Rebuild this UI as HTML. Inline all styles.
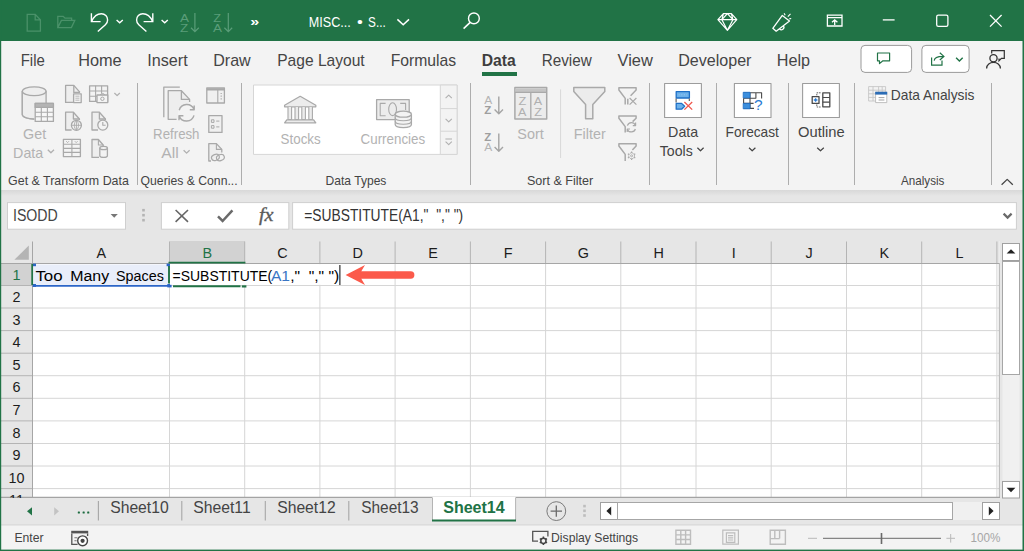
<!DOCTYPE html>
<html><head><meta charset="utf-8"><title>Excel</title>
<style>
*{box-sizing:border-box;margin:0;padding:0}
html,body{width:1024px;height:551px;overflow:hidden;background:#e6e6e6;font-family:"Liberation Sans",sans-serif;color:#444}
.abs{position:absolute}
svg{display:block}
#title{left:0;top:0;width:1024px;height:41px;background:#217346}
#ribbon{left:1px;top:41px;width:1022px;height:149px;background:#f3f3f3}
#ribshadow{left:1px;top:190px;width:1022px;height:6px;background:linear-gradient(#d8d8d8,#e6e6e6)}
.sep{width:1px;background:#adadad;top:83px;height:102px}
</style></head><body>
<div class="abs" id="title"></div>
<div class="abs" id="ribbon"></div>
<div class="abs" id="ribshadow"></div>

<!-- title bar icons -->
<svg class="abs" id="tbi" style="left:0;top:0" width="1024" height="41" fill="none" stroke="#fff" stroke-width="1.4" font-family="Liberation Sans, sans-serif">
<g stroke="#4a9169" stroke-width="1.3">
<path d="M35.2 14.3H27.2V31.2H40.4V19.8ZM35.2 14.3V19.8H40.4"/>
<path d="M57.8 27.6V16.3H63.2L65 18.2H71.6V20.4M57.8 27.6L61.4 20.4H74.8L71.4 27.6Z"/>
</g>
<path d="M91.4 13.2V21.6H100.6"/>
<path d="M91.8 21.3C93.6 16.8 97.2 13.7 101.4 13.7C105 13.7 107.6 16.5 107.6 19.9C107.6 22 106.8 23.4 105.4 24.7L97.8 31.5"/>
<path d="M116.6 19.9L119.7 22.8L122.8 19.9"/>
<path d="M152.8 13.2V21.6H143.6"/>
<path d="M152.4 21.3C150.6 16.8 147 13.7 142.8 13.7C139.2 13.7 136.6 16.5 136.6 19.9C136.6 22 137.4 23.4 138.8 24.7L146.4 31.5"/>
<path d="M161.6 19.9L164.7 22.8L167.8 19.9"/>
<g stroke="#5a9d79" stroke-width="1.2">
<path d="M194.9 13V31.4M191 27.8L194.9 31.6L198.8 27.8"/>
<path d="M228.3 13V31.4M224.4 27.8L228.3 31.6L232.2 27.8"/>
</g>
<g stroke="none" fill="#5a9d79" font-size="11.6">
<text x="179.9" y="21.5" textLength="9" lengthAdjust="spacingAndGlyphs">A</text>
<text x="180" y="31.9" textLength="8.2" lengthAdjust="spacingAndGlyphs">Z</text>
<text x="213.2" y="21.5" textLength="7.8" lengthAdjust="spacingAndGlyphs">Z</text>
<text x="212.9" y="31.9" textLength="9" lengthAdjust="spacingAndGlyphs">A</text>
</g>
<text x="250.3" y="25.7" font-size="12.8" font-weight="bold" fill="#fff" stroke="none" textLength="9" lengthAdjust="spacingAndGlyphs">»</text>
<path d="M397.4 19.4L403.2 24.8L409 19.4" stroke-width="1.5"/>
<circle cx="473.9" cy="18.4" r="5.4"/><path d="M470.2 22.4L463.6 28.6" stroke-width="1.6"/>
<!-- diamond -->
<path d="M723.4 13.7H731.4L736.8 19.7L727.4 30.3L717.9 19.7ZM717.9 19.7H736.8M723.4 13.7L721.9 19.7L727.4 30.3L732.9 19.7L731.4 13.7M727.4 13.7L721.9 19.7M727.4 13.7L732.9 19.7" stroke-width="1.2" stroke-linejoin="round"/>
<!-- megaphone -->
<path d="M772.8 28.3L782.3 15.4L789.5 20.9L776.2 31.2ZM779.6 28.8A2.1 2.1 0 0 0 783.4 26" stroke-width="1.3" stroke-linejoin="round"/>
<path d="M785.2 15.2L784.1 13.3M787.8 16.6L790.5 13.8M789.3 18.9L791.2 18.5" stroke-width="1.1"/>
<!-- ribbon display -->
<path d="M827.4 15.2H842V26H827.4ZM827.4 17.6H842M834.7 25V20M832 22.3L834.7 19.8L837.4 22.3" stroke-width="1.3"/>
<!-- window controls -->
<path d="M882.8 19.9H894.6" stroke-width="1.3"/>
<rect x="936.7" y="15.2" width="11.2" height="11.2" rx="1.6" stroke-width="1.3"/>
<path d="M990 15L1001.6 26.6M1001.6 15L990 26.6" stroke-width="1.3"/>
</svg>

<!-- tabs -->
<div class="abs" style="left:482px;top:72px;width:35px;height:4px;background:#217346"></div>

<!-- tab row right buttons -->
<svg class="abs" id="trb" style="left:856px;top:42px" width="168" height="38" viewBox="856 42 168 38" fill="none">
<rect x="861" y="45.4" width="50.6" height="27" rx="4" fill="#fff" stroke="#9a9a9a" stroke-width="1"/>
<rect x="921.9" y="45.4" width="47.2" height="27" rx="4" fill="#fff" stroke="#9a9a9a" stroke-width="1"/>
<path d="M877.5 53H889.6V60.8H882.9L879.5 63.6V60.8H877.5Z" stroke="#217346" stroke-width="1.2" stroke-linejoin="round"/>
<path d="M931.6 57.6V65.1H942V60.6M934.2 60.6C934.4 57.6 936.8 56.3 943.4 56.4M939.8 52.8L943.9 56.4L939.8 60" stroke="#217346" stroke-width="1.2"/>
<path d="M956.1 57.8L959.4 61.1L962.7 57.8" stroke="#217346" stroke-width="1.4"/>
<circle cx="993.5" cy="58.3" r="3.6" stroke="#333" stroke-width="1.3"/>
<path d="M986.6 68.4C986.6 60.4 1000.4 60.4 1000.4 68.4" stroke="#333" stroke-width="1.3"/>
<path d="M991.7 53.4V50.7H1004.3V58.4H1001.4L999 60.8V58.6" stroke="#333" stroke-width="1.2"/>
</svg>
<!-- ribbon icons A: Get&Transform + Queries -->
<svg class="abs" id="ria" style="left:0;top:80px" width="250" height="90" viewBox="0 80 250 90" fill="none" stroke="#a9a9a9" stroke-width="1.3" stroke-linejoin="round">
<!-- cylinder -->
<path d="M22.3 91.2V114.6C22.3 117 27.4 119 34.3 119" fill="#eeeeee"/>
<path d="M22.3 91.2V114.6C22.3 117 27.4 119 34.3 119V104H46V91.2Z" fill="#eeeeee" stroke="none"/>
<ellipse cx="34.2" cy="91.2" rx="11.9" ry="4.4" fill="#eeeeee"/>
<path d="M22.3 91.2V114.6C22.3 117 27.4 119 34.3 119M46.1 91.2V103"/>
<!-- table -->
<rect x="35.2" y="103.4" width="18.2" height="18" fill="#f7f7f7"/>
<rect x="35.2" y="103.4" width="18.2" height="4" fill="#b4b4b4"/>
<path d="M35.2 112.2H53.4M35.2 116.8H53.4M41.3 107.4V121.4M47.4 107.4V121.4" stroke-width="1.1"/>
<!-- Get Data chevron -->
<path d="M47.8 149.8L50.9 152.8L54 149.8" stroke="#b0b0b0"/>
<!-- icon A: doc with small text doc -->
<path d="M73 102.4H65.6V85.4H73.8L80 92.4" fill="#eeeeee"/>
<path d="M73.8 85.4V92.4H80"/>
<rect x="73.6" y="93.8" width="7.6" height="8.8" fill="#f3f3f3"/>
<path d="M75.4 96.2H79.4M75.4 98.2H79.4M75.4 100.2H79.4" stroke-width="0.8"/>
<!-- icon B: table with camera -->
<rect x="89.6" y="85.8" width="18" height="15.6" fill="#f3f3f3"/>
<path d="M89.6 91H107.6M89.6 96.2H97M95.6 85.8V101.4M101.6 85.8V93.6" stroke-width="1.1"/>
<rect x="97" y="95" width="10.8" height="7.6" fill="#f3f3f3"/><path d="M100.4 95L101.2 93.8H103.8L104.6 95" stroke-width="1"/><circle cx="102.4" cy="98.8" r="1.7" stroke-width="1"/>
<path d="M114.4 93L117.1 95.6L119.8 93" stroke="#b0b0b0"/>
<!-- icon C: doc with globe -->
<path d="M71.6 130H65.6V112.2H73.4L79.4 119V120" fill="#eeeeee"/>
<path d="M73.4 112.2V119H79.4"/>
<circle cx="76.4" cy="125.3" r="5" fill="#f3f3f3"/>
<path d="M71.4 125.3H81.4M76.4 120.3V130.3M76.4 120.3C73.6 122.6 73.6 128 76.4 130.3M76.4 120.3C79.2 122.6 79.2 128 76.4 130.3" stroke-width="0.9"/>
<!-- icon D: doc with clock -->
<path d="M98 130H92V112.2H99.4L105.4 119V120" fill="#eeeeee"/>
<path d="M99.4 112.2V119H105.4"/>
<circle cx="102.8" cy="125.1" r="5" fill="#f3f3f3"/>
<path d="M102.8 122V125.3H105.6" stroke-width="1.1"/>
<!-- icon E: table with header arrows -->
<rect x="63.4" y="139.4" width="17" height="17.2" fill="#f3f3f3"/>
<path d="M63.4 144.2H80.4M63.4 148.4H80.4M63.4 152.4H80.4M71.9 139.4V156.6" stroke-width="1.1"/>
<path d="M66.2 141.2L67.6 142.6L69 141.2M74.8 141.2L76.2 142.6L77.6 141.2" stroke-width="0.9"/>
<!-- icon F: doc with cylinder -->
<path d="M99 157.4H92V139.5H98.4L103.2 145V146" fill="#eeeeee"/>
<path d="M98.4 139.5V145H103.2" stroke-width="1.1"/>
<path d="M99.8 148V155.8C99.8 158 107.4 158 107.4 155.8V148" fill="#f3f3f3"/>
<ellipse cx="103.6" cy="148" rx="3.8" ry="1.7" fill="#f3f3f3"/>
<!-- Refresh All -->
<path d="M179.8 87.2H163.8V117.2"/>
<path d="M176.6 119.3H168.2V90.7H181.4L189.6 99.4V102" fill="#eeeeee"/>
<path d="M181.4 90.7V99.4H189.6"/>
<circle cx="186.6" cy="112.8" r="8.8" fill="#f3f3f3" stroke="none"/>
<path d="M179.2 110.2A7.8 7.8 0 0 1 194 109.6M194.2 105.4V109.8H189.8M194 115.4A7.8 7.8 0 0 1 179.2 116M179 120.2V115.8H183.4" stroke-width="1.4"/>
<path d="M183.6 150.2L186.6 153.1L189.6 150.2" stroke="#b0b0b0"/>
<!-- queries pane -->
<rect x="206.8" y="88" width="17.6" height="15" fill="#f0f0f0"/>
<path d="M206.8 89.4H224.4" stroke-width="2.2"/><path d="M217.8 90V103" stroke-width="1.1"/>
<path d="M220.6 93.5H221.8M220.6 96.2H221.8M220.6 98.9H221.8" stroke-width="1.2"/>
<!-- properties -->
<rect x="208.8" y="115.6" width="13.2" height="16.8" fill="#f0f0f0"/>
<rect x="211.4" y="119.8" width="2.6" height="2.6" stroke-width="1"/><rect x="211.4" y="125.6" width="2.6" height="2.6" stroke-width="1"/>
<path d="M216.2 121.1H219.4M216.2 126.9H219.4" stroke-width="1"/>
<!-- doc with link -->
<path d="M211 161H208.8V143.6H216.4L221.8 149.4V152.6" fill="#eeeeee"/>
<path d="M216.4 143.6V149.4H221.8" stroke-width="1.1"/>
<ellipse cx="215.4" cy="157.4" rx="4" ry="3" stroke-width="1.2" transform="rotate(-20 215.4 157.4)"/>
<ellipse cx="220.4" cy="157.6" rx="4" ry="3" stroke-width="1.2" transform="rotate(-20 220.4 157.6)"/>
</svg>
<!-- ribbon icons B: Data Types + Sort/Filter -->
<svg class="abs" id="rib" style="left:250px;top:80px" width="400" height="90" viewBox="250 80 400 90" fill="none" stroke="#a9a9a9" stroke-width="1.3" stroke-linejoin="round" font-family="Liberation Sans, sans-serif">
<!-- gallery -->
<rect x="253.5" y="85" width="203.6" height="69.4" fill="#fff" stroke="#d6d6d6" stroke-width="1"/>
<rect x="440.3" y="85" width="16.8" height="69.4" fill="#f3f3f3" stroke="#d6d6d6" stroke-width="1"/>
<path d="M440.3 108.6H457.1M440.3 131.2H457.1" stroke="#d6d6d6" stroke-width="1"/>
<path d="M445.6 98.2L448.7 95.1L451.8 98.2M445.6 118.8L448.7 121.9L451.8 118.8M445.4 139H452M445.6 141.6L448.7 144.7L451.8 141.6" stroke="#b0b0b0" stroke-width="1.1"/>
<!-- stocks (bank) -->
<path d="M284.6 105.2L300.2 96.3L315.8 105.2V106.8H284.6Z" fill="#ececec"/>
<path d="M288 107V119.6H291.6V107M295 107V119.6H298.6V107M301.8 107V119.6H305.4V107M308.8 107V119.6H312.4V107" fill="#ececec" stroke-width="1.1"/>
<path d="M286.8 119.8H313.6L315.8 122.8H284.6Z" fill="#ececec"/>
<!-- currencies -->
<rect x="376.6" y="99.6" width="32.6" height="20" fill="#ececec"/>
<path d="M385.6 103.4H380.2V115.8H385.6M400.2 103.4H405.6V110" stroke-width="1.1"/>
<ellipse cx="392.6" cy="109.2" rx="3.9" ry="6.4" stroke-width="1.1"/>
<path d="M395.2 114.2V124.6C395.2 128.6 411.4 128.6 411.4 124.6V114.2" fill="#f3f3f3"/>
<ellipse cx="403.3" cy="114.2" rx="8.1" ry="3" fill="#f3f3f3"/>
<path d="M395.2 117.8C395.2 121.8 411.4 121.8 411.4 117.8M395.2 121.2C395.2 125.2 411.4 125.2 411.4 121.2" stroke-width="1.1"/>
<!-- AZ / ZA sort -->
<path d="M498.8 96.4V113.6M494.6 109.6L498.8 113.8L503 109.6M498.8 133.4V151M494.6 147L498.8 151.2L503 147" stroke="#a4a4a4" stroke-width="1.4"/>
<g stroke="none" fill="#b4b4b4" font-size="10.2">
<text x="484.2" y="103.8" textLength="8" lengthAdjust="spacingAndGlyphs">A</text>
<text x="484.2" y="151.4" textLength="8" lengthAdjust="spacingAndGlyphs">A</text>
</g>
<g stroke="none" fill="#9e9e9e" font-size="10.4" font-weight="bold">
<text x="484.2" y="114.3" textLength="7" lengthAdjust="spacingAndGlyphs">Z</text>
<text x="484.2" y="140.9" textLength="7" lengthAdjust="spacingAndGlyphs">Z</text>
</g>
<!-- Sort icon -->
<rect x="514.9" y="87.6" width="31.8" height="31.4" fill="#ececec" stroke-width="1.5"/>
<rect x="515.6" y="88.4" width="30.4" height="3.6" fill="#c4c4c4" stroke="none"/>
<path d="M530.8 92V119M515 92.4H546.6" stroke-width="1.3"/>
<g stroke="none" fill="#b0b0b0" font-size="11.4">
<text x="518.4" y="104.5" textLength="7.8" lengthAdjust="spacingAndGlyphs">Z</text>
<text x="518" y="115.7" textLength="8.4" lengthAdjust="spacingAndGlyphs">A</text>
<text x="533.8" y="104.5" textLength="8.4" lengthAdjust="spacingAndGlyphs">A</text>
<text x="534.2" y="115.7" textLength="7.8" lengthAdjust="spacingAndGlyphs">Z</text>
</g>
<path d="M560.6 89.4V158" stroke="#d8d8d8" stroke-width="1"/>
<!-- Filter -->
<path d="M573.8 87.6H604.8V91.4L592.8 104.4V118.8H585.6V104.4L573.8 91.4Z" fill="#ececec" stroke-width="1.5"/>
<!-- small filters -->
<path d="M625.2 104.4V98.4L618.9 90V87.7H636.1V90L630.6 95.8M627.8 98.8V104.4" stroke-width="1.5"/>
<path d="M629.6 98L636.4 104.6M636.4 98L629.6 104.6" stroke-width="1.2"/>
<path d="M625.2 132.6V126.6L618.9 118.2V115.9H636.1V118.2L632.6 121.6" stroke-width="1.5"/>
<path d="M627.4 125.6A4.3 4.3 0 0 1 635.4 125.2M635.6 122.6V125.6H632.8M635.4 129A4.3 4.3 0 0 1 627.4 129.4M627.2 132V129H630" stroke-width="1.2"/>
<path d="M625.2 161V154.4L618.9 146V143.7H636.1V146L632.4 150" stroke-width="1.5"/>
<circle cx="631.6" cy="155.8" r="2.9" stroke-width="1" stroke-dasharray="1.6 0.7"/><circle cx="631.6" cy="155.8" r="1" stroke-width="0.9"/>
<path d="M631.6 151.6V153M631.6 158.6V160M627.9 153.7L629.1 154.4M634.1 157.2L635.3 157.9M627.9 157.9L629.1 157.2M634.1 154.4L635.3 153.7" stroke-width="1.2"/>
</svg>
<!-- ribbon icons C: Data Tools, Forecast, Outline, Analysis -->
<svg class="abs" id="ric" style="left:650px;top:80px" width="374" height="110" viewBox="650 80 374 110" fill="none" stroke-linejoin="round" font-family="Liberation Sans, sans-serif">
<rect x="664.6" y="83.5" width="36.8" height="34" fill="#fff" stroke="#9c9c9c" stroke-width="1.1"/>
<rect x="734.4" y="83.5" width="36.6" height="34" fill="#fff" stroke="#9c9c9c" stroke-width="1.1"/>
<rect x="802.6" y="83.5" width="36.8" height="34" fill="#fff" stroke="#9c9c9c" stroke-width="1.1"/>
<!-- data tools icon -->
<rect x="676.2" y="91.6" width="13.2" height="6.4" fill="#6db1ea" stroke="#1e6fc6" stroke-width="1.3"/>
<path d="M678.6 94.8H687" stroke="#9ccaf2" stroke-width="0.8" stroke-dasharray="1.2 1.4"/>
<path d="M676.1 98.4V102.6M689.3 98.4V101" stroke="#555" stroke-width="1.1"/>
<path d="M676.2 103.4H681.6L684.6 106.3L681.6 109.2H676.2Z" fill="#6db1ea" stroke="#1e6fc6" stroke-width="1.3"/>
<path d="M684.4 102L692.2 109.6M692.2 102L684.4 109.6" stroke="#f0564d" stroke-width="1.3"/>
<!-- forecast icon -->
<path d="M743.6 92.8H761.6V98.4M743.6 98.2H756M743.6 103.4H753.6M743.6 108.4H754M750 92.8V108.4M755.9 92.8V98.4M743.6 98.2V103.4" stroke="#4a4a4a" stroke-width="1.1"/>
<rect x="743.2" y="92.3" width="6.8" height="5.6" fill="#3c8fdd" stroke="#1e6fc6" stroke-width="0.8"/><rect x="743.2" y="103.4" width="6.8" height="5.4" fill="#3c8fdd" stroke="#1e6fc6" stroke-width="0.8"/>
<text x="754" y="109.8" font-size="14.6" fill="#2b7cd3" textLength="8.6" lengthAdjust="spacingAndGlyphs">?</text>
<!-- outline icon -->
<rect x="812.2" y="96.6" width="6.8" height="6.8" stroke="#4a4a4a" stroke-width="1.3"/>
<path d="M815.6 98.2V101.8M813.8 100H817.4" stroke="#2b7cd3" stroke-width="1.3"/>
<path d="M820.6 92.8H816.8V95.6M816.8 104.4V107H820.6" stroke="#666" stroke-width="1" stroke-dasharray="1.6 0.8"/>
<rect x="822.8" y="92.8" width="7" height="14" stroke="#4a4a4a" stroke-width="1.3"/>
<path d="M822.8 97.5H829.8M822.8 102.2H829.8" stroke="#4a4a4a" stroke-width="1.2"/>
<!-- chevrons -->
<path d="M697.4 147.8L700.5 150.8L703.6 147.8M749 147.8L752.2 150.8L755.4 147.8M817.2 147.8L820.5 150.8L823.8 147.8" stroke="#444" stroke-width="1.2"/>
<!-- data analysis icon -->
<path d="M868.6 86.6H885.6V101H868.6ZM868.6 90.2H885.6M868.6 93.8H876M868.6 97.4H876M873 86.6V101M878.6 86.6V92M882.2 86.6V92" stroke="#c6c6c6" stroke-width="0.9"/>
<rect x="875.6" y="92.2" width="11.2" height="10.4" fill="#fff" stroke="#b9b9b9" stroke-width="0.9"/>
<rect x="875.2" y="91.8" width="12" height="2.8" fill="#2b6cb5"/>
<path d="M878.6 97.6H884.4M878.6 100H884.4" stroke="#999" stroke-width="0.9"/>
<!-- collapse caret -->
<path d="M1001.6 184.8L1007.2 179.4L1012.8 184.8" stroke="#444" stroke-width="1.3"/>
</svg>
<!-- group labels -->

<!-- separators -->
<div class="abs sep" style="left:137px"></div>
<div class="abs sep" style="left:241px"></div>
<div class="abs sep" style="left:470px"></div>
<div class="abs sep" style="left:649px"></div>
<div class="abs sep" style="left:716px"></div>
<div class="abs sep" style="left:788px"></div>
<div class="abs sep" style="left:854px"></div>
<div class="abs sep" style="left:991px"></div>

<!-- ribbon buttons text -->

<!-- formula bar -->
<svg class="abs" id="fbar" style="left:0;top:196px" width="1024" height="40" viewBox="0 196 1024 40" fill="none" font-family="Liberation Serif, serif">
<rect x="7.5" y="202.6" width="118" height="26.6" fill="#fff" stroke="#cfcfcf"/>
<rect x="161.4" y="202.6" width="127.4" height="26.6" fill="#fff" stroke="#cfcfcf"/>
<rect x="292.6" y="202.6" width="723.8" height="26.6" fill="#fff" stroke="#cfcfcf"/>
<path d="M110.6 214.1H117.8L114.2 217.7Z" fill="#777"/>
<rect x="142.2" y="208.9" width="2.6" height="2.6" fill="#b4b4b4"/><rect x="142.2" y="213.9" width="2.6" height="2.6" fill="#b4b4b4"/><rect x="142.2" y="218.9" width="2.6" height="2.6" fill="#b4b4b4"/>
<path d="M175.6 210L188 221.8M188 210L175.6 221.8" stroke="#666" stroke-width="1.6"/>
<path d="M218 216.4L222.6 221L232.4 210.4" stroke="#6a6a6a" stroke-width="2.5"/>
<text x="259" y="220.6" font-size="18.5" font-style="italic" fill="#5a5a5a" stroke="#5a5a5a" stroke-width="0.35" textLength="14.6" lengthAdjust="spacingAndGlyphs">fx</text>
<path d="M1003.6 213.6L1007.6 217.6L1011.6 213.6" stroke="#6a6a6a" stroke-width="2.2"/>
</svg>

<!-- grid -->
<svg class="abs" style="left:0;top:236px" width="1024" height="262" viewBox="0 236 1024 262" font-family="Liberation Sans, sans-serif">
<rect x="1" y="241" width="998.5" height="256.5" fill="#fff"/>
<rect x="1" y="241" width="998.5" height="22.5" fill="#e6e6e6"/>
<rect x="1" y="241" width="31.7" height="256.5" fill="#e6e6e6"/>
<rect x="169.7" y="241" width="75.2" height="21" fill="#d2d2d2"/>
<rect x="1" y="263.5" width="31" height="22" fill="#d2d2d2"/>
<path d="M169.5 263.5V497M244.7 263.5V497M319.9 263.5V497M395.1 263.5V497M470.4 263.5V497M545.6 263.5V497M620.8 263.5V497M696.0 263.5V497M771.2 263.5V497M846.5 263.5V497M921.7 263.5V497M996.9 263.5V497M32.5 285.5H999M32.5 308.0H999M32.5 330.6H999M32.5 353.2H999M32.5 375.7H999M32.5 398.3H999M32.5 420.9H999M32.5 443.5H999M32.5 466.0H999M32.5 488.6H999" stroke="#d6d6d6" stroke-width="1" fill="none"/>
<path d="M169.5 241.5V263M244.7 241.5V263M319.9 241.5V263M395.1 241.5V263M470.4 241.5V263M545.6 241.5V263M620.8 241.5V263M696.0 241.5V263M771.2 241.5V263M846.5 241.5V263M921.7 241.5V263M996.9 241.5V263M1 285.5H32M1 308.0H32M1 330.6H32M1 353.2H32M1 375.7H32M1 398.3H32M1 420.9H32M1 443.5H32M1 466.0H32M1 488.6H32" stroke="#b4b4b4" stroke-width="1" fill="none"/>
<path d="M1 263.5H999M32.5 241.5V497" stroke="#a6a6a6" stroke-width="1" fill="none"/>
<path d="M999.3 263V497.5" stroke="#b0b0b0" stroke-width="1" fill="none"/><path d="M1 497.4H1000" stroke="#a4a4a4" stroke-width="1.3" fill="none"/>
<path d="M28.8 245.4V259.8H14.4Z" fill="#b4b4b4"/>
<text x="101.3" y="258" font-size="14.4" text-anchor="middle" fill="#1c1c1c">A</text>
<text x="207.3" y="258" font-size="14.4" text-anchor="middle" fill="#217346">B</text>
<text x="282.5" y="258" font-size="14.4" text-anchor="middle" fill="#1c1c1c">C</text>
<text x="357.7" y="258" font-size="14.4" text-anchor="middle" fill="#1c1c1c">D</text>
<text x="433.0" y="258" font-size="14.4" text-anchor="middle" fill="#1c1c1c">E</text>
<text x="508.2" y="258" font-size="14.4" text-anchor="middle" fill="#1c1c1c">F</text>
<text x="583.4" y="258" font-size="14.4" text-anchor="middle" fill="#1c1c1c">G</text>
<text x="658.6" y="258" font-size="14.4" text-anchor="middle" fill="#1c1c1c">H</text>
<text x="733.8" y="258" font-size="14.4" text-anchor="middle" fill="#1c1c1c">I</text>
<text x="809.0" y="258" font-size="14.4" text-anchor="middle" fill="#1c1c1c">J</text>
<text x="884.3" y="258" font-size="14.4" text-anchor="middle" fill="#1c1c1c">K</text>
<text x="959.5" y="258" font-size="14.4" text-anchor="middle" fill="#1c1c1c">L</text>
<text x="16.5" y="279.7" font-size="14.4" text-anchor="middle" fill="#217346">1</text>
<text x="16.5" y="302.1" font-size="14.4" text-anchor="middle" fill="#1c1c1c">2</text>
<text x="16.5" y="324.6" font-size="14.4" text-anchor="middle" fill="#1c1c1c">3</text>
<text x="16.5" y="347.2" font-size="14.4" text-anchor="middle" fill="#1c1c1c">4</text>
<text x="16.5" y="369.8" font-size="14.4" text-anchor="middle" fill="#1c1c1c">5</text>
<text x="16.5" y="392.3" font-size="14.4" text-anchor="middle" fill="#1c1c1c">6</text>
<text x="16.5" y="414.9" font-size="14.4" text-anchor="middle" fill="#1c1c1c">7</text>
<text x="16.5" y="437.5" font-size="14.4" text-anchor="middle" fill="#1c1c1c">8</text>
<text x="16.5" y="460.0" font-size="14.4" text-anchor="middle" fill="#1c1c1c">9</text>
<text x="16.5" y="482.6" font-size="14.4" text-anchor="middle" fill="#1c1c1c">10</text>
<text x="16.5" y="505.2" font-size="14.4" text-anchor="middle" fill="#1c1c1c">11</text>
</svg>

<!-- deco: selection, arrow, scrollbars, tab bar, status bar -->
<svg class="abs" id="deco" style="left:0;top:0" width="1024" height="551">
<!-- status bar bg -->
<rect x="1" y="525.3" width="1022" height="25" fill="#f3f3f3"/>
<path d="M1 524.9H1023" stroke="#d6d6d6" stroke-width="1"/>
<!-- A1 reference highlight -->
<rect x="33.5" y="264.5" width="134.5" height="20.5" fill="#e9eefa"/>
<path d="M36 285.9H168" stroke="#2c66c8" stroke-width="1.8"/>
<rect x="32.6" y="263.6" width="3.4" height="2.6" fill="#2c66c8"/><rect x="32.6" y="284" width="3.4" height="3" fill="#2c66c8"/>
<rect x="166.6" y="263.6" width="3.4" height="2.6" fill="#2c66c8"/><rect x="167.3" y="284" width="4.3" height="3.4" fill="#2c66c8"/>
<!-- row header 1 green edge, col B green edge -->
<path d="M32.2 264V285" stroke="#217346" stroke-width="1.8"/>
<path d="M168.5 262.6H245.4" stroke="#217346" stroke-width="1.8"/>
<!-- B1 edit cell -->
<rect x="170" y="264.2" width="171" height="20.6" fill="#fff"/>
<path d="M169 266V283.5" stroke="#217346" stroke-width="1.9"/>
<path d="M173 286.2H240.5" stroke="#217346" stroke-width="1.9"/>
<rect x="241.8" y="285.3" width="4.6" height="2.2" fill="#217346"/>
<!-- text cursor -->
<path d="M339.9 265V285" stroke="#000" stroke-width="1"/>
<!-- red arrow -->
<path d="M345.6 275L365 265L361.3 271.3H410.7a3.7 3.7 0 0 1 0 7.4H361.3L365 285Z" fill="#fb5a4b"/>
<!-- vertical scrollbar -->
<rect x="1002.5" y="243.5" width="17" height="17" fill="#fff" stroke="#a0a0a0"/>
<path d="M1006.6 253.6H1015.4L1011 249.2Z" fill="#222"/>
<rect x="1002.5" y="261.5" width="17" height="219" fill="#f0f0f0" stroke="none"/>
<rect x="1002.5" y="261.5" width="17" height="113" fill="#fff" stroke="#a6a6a6"/>
<rect x="1002.5" y="481.5" width="17" height="16.5" fill="#fff" stroke="#a0a0a0"/>
<path d="M1006.6 487.8H1015.4L1011 492.2Z" fill="#222"/>
<!-- horizontal scrollbar -->
<rect x="600.5" y="502.5" width="17" height="17" fill="#fff" stroke="#a0a0a0"/>
<path d="M611.2 506.4V515.6L606.4 511Z" fill="#222"/>
<rect x="618" y="502" width="364" height="18" fill="#f0f0f0"/>
<rect x="617.5" y="502.5" width="335" height="17" fill="#fff" stroke="#a6a6a6"/>
<rect x="982.5" y="502.5" width="17" height="17" fill="#fff" stroke="#a0a0a0"/>
<path d="M988.8 506.4V515.6L993.6 511Z" fill="#222"/>
<!-- new sheet button + grip -->
<circle cx="556.3" cy="511.1" r="9.4" fill="none" stroke="#7a7a7a" stroke-width="1"/>
<path d="M550.6 511.1H562M556.3 505.4V516.8" stroke="#6a6a6a" stroke-width="1.3"/>
<rect x="583.2" y="504.8" width="2.6" height="2.6" fill="#bdbdbd"/><rect x="583.2" y="509.5" width="2.6" height="2.6" fill="#bdbdbd"/><rect x="583.2" y="514.2" width="2.6" height="2.6" fill="#bdbdbd"/>
<!-- sheet nav -->
<path d="M32 507.2V515.4L27 511.3Z" fill="#217346"/>
<path d="M54.2 507.2V515.4L59 511.3Z" fill="#c3c3c3"/>
<rect x="77.8" y="511.5" width="2.1" height="2.1" rx="0.5" fill="#1b6b3f"/><rect x="82.6" y="511.5" width="2.1" height="2.1" rx="0.5" fill="#1b6b3f"/><rect x="87.2" y="511.5" width="2.1" height="2.1" rx="0.5" fill="#1b6b3f"/>
<path d="M98.4 501V520.4M181.8 501V520.4M265.3 501V520.4M348.8 501V520.4" stroke="#a6a6a6" stroke-width="1.1"/>
<!-- active tab -->
<rect x="432.5" y="497" width="83" height="23" fill="#fff"/>
<path d="M432.5 498V520M515.6 498V520" stroke="#b4b4b4" stroke-width="1"/>
<path d="M432 520.5H516" stroke="#217346" stroke-width="2.2"/>
<!-- status icons -->
<path d="M71.8 533.4V544.4H77.6M87.6 533.4V536" stroke="#555" stroke-width="1.3" fill="none"/>
<path d="M71.2 532.1H88.2" stroke="#555" stroke-width="2.6"/>
<path d="M74.4 537.8H77.4M74.4 540.8H76.6" stroke="#777" stroke-width="1.1"/>
<circle cx="82.6" cy="540.8" r="4.9" fill="#fff" stroke="#444" stroke-width="1.4"/><circle cx="82.6" cy="540.8" r="2.1" fill="#444"/>
<path d="M538 541.2H532.7V531.3H547.9V536.6" stroke="#555" stroke-width="1.3" fill="none"/>
<circle cx="543.4" cy="540.8" r="2.6" fill="none" stroke="#444" stroke-width="1.5"/>
<path d="M543.4 536.6V538M543.4 543.6V545M539.8 538.7L541 539.4M545.8 542.2L547 542.9M539.8 542.9L541 542.2M545.8 539.4L547 538.7" stroke="#444" stroke-width="1.5"/>
<path d="M675.9 530.2H690.5V544.2H675.9ZM680.8 530.2V544.2M685.6 530.2V544.2M675.9 534.9H690.5M675.9 539.5H690.5" stroke="#bdbdbd" stroke-width="1.4" fill="none"/>
<path d="M722.8 530.2H738.4V544.2H722.8ZM726.4 532.8H734.8V542.4H726.4ZM728 535.6H733.2M728 537.8H733.2M728 540H733.2" stroke="#bdbdbd" stroke-width="1.2" fill="none"/>
<path d="M770.2 530.2H785.4V544.2H770.2ZM774.8 530.2V538.6M779.6 530.2V538.6M770.2 538.6H779.6" stroke="#bdbdbd" stroke-width="1.4" fill="none"/>
<!-- zoom slider -->
<path d="M808 538.3H817" stroke="#b8b8b8" stroke-width="1"/>
<path d="M823 538.3H941" stroke="#6a6a6a" stroke-width="1"/>
<path d="M881.5 533V544" stroke="#6a6a6a" stroke-width="1.6"/>
<path d="M946.4 538.3H955M950.7 534V542.6" stroke="#b8b8b8" stroke-width="1"/>
</svg>

<!-- status bar -->
<svg class="abs" id="txt" style="left:0;top:0;white-space:pre" width="1024" height="551" font-family="Liberation Sans, sans-serif" xml:space="preserve">
<!-- txt:title -->
<text x="308.8" y="27" font-size="14.5" textLength="42.0" lengthAdjust="spacingAndGlyphs" fill="#fff">MISC...</text>
<text x="357.1" y="27" font-size="14.5" textLength="5.8" lengthAdjust="spacingAndGlyphs" fill="#fff">•</text>
<text x="368.1" y="27" font-size="14.5" textLength="17.6" lengthAdjust="spacingAndGlyphs" fill="#fff">S...</text>
<!-- txt:tabs -->
<text x="20.7" y="65.7" font-size="16.2" textLength="24.1" lengthAdjust="spacingAndGlyphs" fill="#454545">File</text>
<text x="78.2" y="65.7" font-size="16.2" textLength="43.5" lengthAdjust="spacingAndGlyphs" fill="#454545">Home</text>
<text x="147.2" y="65.7" font-size="16.2" textLength="40.5" lengthAdjust="spacingAndGlyphs" fill="#454545">Insert</text>
<text x="213.2" y="65.7" font-size="16.2" textLength="37.5" lengthAdjust="spacingAndGlyphs" fill="#454545">Draw</text>
<text x="277.2" y="65.7" font-size="16.2" textLength="87.5" lengthAdjust="spacingAndGlyphs" fill="#454545">Page Layout</text>
<text x="390.7" y="65.7" font-size="16.2" textLength="65.5" lengthAdjust="spacingAndGlyphs" fill="#454545">Formulas</text>
<text x="541.7" y="65.7" font-size="16.2" textLength="50.0" lengthAdjust="spacingAndGlyphs" fill="#454545">Review</text>
<text x="617.5" y="65.7" font-size="16.2" textLength="35.3" lengthAdjust="spacingAndGlyphs" fill="#454545">View</text>
<text x="678.2" y="65.7" font-size="16.2" textLength="73.3" lengthAdjust="spacingAndGlyphs" fill="#454545">Developer</text>
<text x="776.7" y="65.7" font-size="16.2" textLength="33.3" lengthAdjust="spacingAndGlyphs" fill="#454545">Help</text>
<text x="481.7" y="65.7" font-size="16.2" textLength="34.0" lengthAdjust="spacingAndGlyphs" fill="#3e3e3e" font-weight="bold">Data</text>
<!-- txt:group labels -->
<text x="8.1" y="185" font-size="12.6" textLength="120.8" lengthAdjust="spacingAndGlyphs" fill="#444">Get &amp; Transform Data</text>
<text x="140.6" y="185" font-size="12.6" textLength="97.0" lengthAdjust="spacingAndGlyphs" fill="#444">Queries &amp; Conn...</text>
<text x="325.6" y="185" font-size="12.6" textLength="60.8" lengthAdjust="spacingAndGlyphs" fill="#444">Data Types</text>
<text x="526.9" y="185" font-size="12.6" textLength="66.3" lengthAdjust="spacingAndGlyphs" fill="#444">Sort &amp; Filter</text>
<text x="901.0" y="185" font-size="12.6" textLength="43.4" lengthAdjust="spacingAndGlyphs" fill="#444">Analysis</text>
<!-- txt:ribbon buttons -->
<text x="23.1" y="138.5" font-size="14.4" textLength="23.1" lengthAdjust="spacingAndGlyphs" fill="#b2b2b2">Get</text>
<text x="13.1" y="157.5" font-size="14.4" textLength="30.1" lengthAdjust="spacingAndGlyphs" fill="#b2b2b2">Data</text>
<text x="153.1" y="138.5" font-size="14.4" textLength="46.4" lengthAdjust="spacingAndGlyphs" fill="#b2b2b2">Refresh</text>
<text x="161.3" y="157.5" font-size="14.4" textLength="17.4" lengthAdjust="spacingAndGlyphs" fill="#b2b2b2">All</text>
<text x="280.6" y="143.75" font-size="14.4" textLength="40.1" lengthAdjust="spacingAndGlyphs" fill="#b2b2b2">Stocks</text>
<text x="360.6" y="143.75" font-size="14.4" textLength="64.6" lengthAdjust="spacingAndGlyphs" fill="#b2b2b2">Currencies</text>
<text x="517.3" y="138.5" font-size="14.4" textLength="26.4" lengthAdjust="spacingAndGlyphs" fill="#b2b2b2">Sort</text>
<text x="573.8" y="138.5" font-size="14.4" textLength="31.9" lengthAdjust="spacingAndGlyphs" fill="#b2b2b2">Filter</text>
<text x="668.1" y="136.75" font-size="14.4" textLength="30.1" lengthAdjust="spacingAndGlyphs" fill="#444">Data</text>
<text x="659.8" y="156.25" font-size="14.4" textLength="32.9" lengthAdjust="spacingAndGlyphs" fill="#444">Tools</text>
<text x="725.6" y="137.3" font-size="14.4" textLength="53.3" lengthAdjust="spacingAndGlyphs" fill="#444">Forecast</text>
<text x="798.0" y="137.3" font-size="14.4" textLength="46.7" lengthAdjust="spacingAndGlyphs" fill="#444">Outline</text>
<text x="890.8" y="99.7" font-size="14.4" textLength="83.6" lengthAdjust="spacingAndGlyphs" fill="#444">Data Analysis</text>
<!-- txt:formula bar -->
<text x="13.0" y="221.3" font-size="16" textLength="44.8" lengthAdjust="spacingAndGlyphs" fill="#444">ISODD</text>
<text x="304.2" y="221.3" font-size="16" textLength="159.0" lengthAdjust="spacingAndGlyphs" fill="#333">=SUBSTITUTE(A1,&quot;&#160; &quot;,&quot; &quot;)</text>
<!-- txt:cells -->
<text x="35.4" y="280.8" font-size="15.5" textLength="27.2" lengthAdjust="spacingAndGlyphs" fill="#000">Too</text>
<text x="70.2" y="280.8" font-size="15.5" textLength="38.9" lengthAdjust="spacingAndGlyphs" fill="#000">Many</text>
<text x="116.0" y="280.8" font-size="15.5" textLength="47.8" lengthAdjust="spacingAndGlyphs" fill="#000">Spaces</text>
<text x="172.6" y="280.8" font-size="15.5" textLength="99.6" lengthAdjust="spacingAndGlyphs" fill="#000">=SUBSTITUTE(</text>
<text x="270.9" y="280.8" font-size="15.5" textLength="19.1" lengthAdjust="spacingAndGlyphs" fill="#3a75c4">A1</text>
<text x="290.2" y="280.8" font-size="15.5" textLength="49.0" lengthAdjust="spacingAndGlyphs" fill="#000">,&quot;&#160; &quot;,&quot; &quot;)</text>
<!-- txt:sheet tab labels -->
<text x="110.2" y="513" font-size="15.7" textLength="58.5" lengthAdjust="spacingAndGlyphs" fill="#444">Sheet10</text>
<text x="193.2" y="513" font-size="15.7" textLength="57.5" lengthAdjust="spacingAndGlyphs" fill="#444">Sheet11</text>
<text x="277.2" y="513" font-size="15.7" textLength="58.5" lengthAdjust="spacingAndGlyphs" fill="#444">Sheet12</text>
<text x="361.2" y="513" font-size="15.7" textLength="57.5" lengthAdjust="spacingAndGlyphs" fill="#444">Sheet13</text>
<text x="443.2" y="513" font-size="15.7" textLength="61.5" lengthAdjust="spacingAndGlyphs" fill="#217346" font-weight="bold">Sheet14</text>
<!-- txt:status -->
<text x="14.4" y="541.6" font-size="12.2" textLength="29.2" lengthAdjust="spacingAndGlyphs" fill="#444">Enter</text>
<text x="551.1" y="541.9" font-size="12.2" textLength="87.1" lengthAdjust="spacingAndGlyphs" fill="#444">Display Settings</text>
<text x="970.4" y="542" font-size="12.2" textLength="29.9" lengthAdjust="spacingAndGlyphs" fill="#a6a6a6">100%</text>
</svg>

<svg class="abs" style="left:0;top:0" width="1024" height="551"><rect x="0" y="0" width="1.2" height="551" fill="#217346"/><rect x="1022.5" y="41" width="1.5" height="510" fill="#217346"/><rect x="0" y="549.6" width="1024" height="1.4" fill="#217346"/></svg>
</body></html>
